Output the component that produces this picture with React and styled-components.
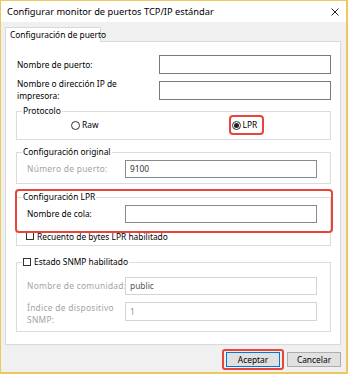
import React from "react";
import styled, { createGlobalStyle } from "styled-components";

const GlobalStyle = createGlobalStyle`
  html, body {
    margin: 0;
    padding: 0;
    background: #ffffff;
  }
  body {
    font-family: "Noto Sans", "Open Sans", sans-serif;
    font-size: 8.4px;
    color: #000;
  }
  * {
    box-sizing: border-box;
  }
`;

const Window = styled.div`
  width: 348px;
  height: 374px;
  border: 1px solid #ecc85e;
  border-right-width: 2px;
  border-bottom-width: 2px;
  background: #f0f0f0;
  display: flex;
  flex-direction: column;
`;

const TitleBar = styled.div`
  height: 21px;
  background: #ffffff;
  display: flex;
  align-items: center;
  justify-content: space-between;
  padding: 0 7px 0 6px;
`;

const Title = styled.div`
  font-size: 9.3px;
  color: #000;
  white-space: nowrap;
`;

const Body = styled.div`
  display: flex;
  flex-direction: column;
  padding: 5px 5px 0 4px;
`;

const Tab = styled.div`
  align-self: flex-start;
  width: 96px;
  height: 15px;
  background: #ffffff;
  border: 1px solid #d9d9d9;
  border-bottom: none;
  margin-bottom: -1px;
  padding: 0 4px;
  line-height: 14px;
  white-space: nowrap;
  position: relative;
  z-index: 1;
`;

const Panel = styled.div`
  height: 304px;
  background: #ffffff;
  border: 1px solid #d9d9d9;
  padding: 13px 9px 0 10px;
  display: flex;
  flex-direction: column;
`;

const FieldRow = styled.div`
  display: grid;
  grid-template-columns: ${(p) => p.$label}px 1fr;
  align-items: ${(p) => (p.$top ? "start" : "center")};
  margin-top: ${(p) => p.$mt || 0}px;
`;

const Label = styled.div`
  padding-left: 1px;
  line-height: 12px;
  white-space: nowrap;
  color: ${(p) => (p.$disabled ? "#a3a3a3" : "#000")};
  letter-spacing: ${(p) => (p.$disabled ? "0.3px" : "0")};
`;

const Input = styled.div`
  height: ${(p) => p.$h || 19}px;
  width: ${(p) => p.$w}px;
  background: #ffffff;
  border: 1px solid ${(p) => p.$border || "#7a7a7a"};
  padding: 0 4px;
  line-height: ${(p) => (p.$h || 19) - 2}px;
  color: ${(p) => p.$color || "#333"};
`;

const Group = styled.fieldset`
  margin: ${(p) => p.$mt || 0}px 0 0 0;
  padding: ${(p) => p.$pt || 0}px 11px ${(p) => p.$pb || 0}px 9px;
  border: 1px solid #dcdcdc;
  width: 315px;
  position: relative;
  min-width: 0;
`;

const Legend = styled.legend`
  margin-left: -4px;
  padding: 0 1px;
  line-height: 12px;
  height: 12px;
  display: flex;
  align-items: center;
  gap: 3px;
  white-space: nowrap;
`;

const RadioRow = styled.div`
  display: flex;
  align-items: center;
  padding-left: 42px;
  gap: 123px;
  height: 12px;
`;

const Choice = styled.label`
  display: flex;
  align-items: center;
  gap: 2px;
  line-height: 12px;
  border: ${(p) => (p.$marked ? "2px solid #e8433c" : "2px solid transparent")};
  border-radius: 4px;
  padding: 2px 5px 2px 1px;
`;

const Radio = styled.span`
  width: 9px;
  height: 9px;
  border-radius: 50%;
  border: 1px solid #333;
  background: #fff;
  display: flex;
  align-items: center;
  justify-content: center;
  &::after {
    content: "";
    width: 5px;
    height: 5px;
    border-radius: 50%;
    background: ${(p) => (p.$checked ? "#222" : "transparent")};
  }
`;

const Check = styled.span`
  width: 8px;
  height: 8px;
  border: 1px solid #333;
  background: #fff;
  flex-shrink: 0;
`;

const CheckRow = styled.div`
  display: flex;
  align-items: center;
  gap: 3px;
  height: 12px;
  white-space: nowrap;
  margin-top: ${(p) => p.$mt || 0}px;
`;

const Highlight = styled.div`
  position: absolute;
  left: -2px;
  top: -14px;
  width: 318px;
  height: 44px;
  border: 2px solid #e8433c;
  border-radius: 4px;
  pointer-events: none;
`;

const ButtonBar = styled.div`
  display: flex;
  justify-content: flex-end;
  align-items: center;
  gap: 3px;
  padding: 4px 0 0 0;
`;

const Marked = styled.div`
  border: 2px solid #e8433c;
  border-radius: 3px;
  padding: 1px 2px;
`;

const Button = styled.button`
  width: 54px;
  height: 15px;
  font-family: inherit;
  font-size: 8.4px;
  color: #000;
  background: #e1e1e1;
  border: 1px solid ${(p) => (p.$primary ? "#0078d7" : "#adadad")};
  padding: 0;
  line-height: 13px;
`;

const CloseIcon = () => (
  <svg width="8" height="8" viewBox="0 0 8 8">
    <path d="M0.5 0.5 L7.5 7.5 M7.5 0.5 L0.5 7.5" stroke="#222" strokeWidth="1" />
  </svg>
);

export default function App() {
  return (
    <>
      <GlobalStyle />
      <Window>
        <TitleBar>
          <Title>Configurar monitor de puertos TCP/IP estándar</Title>
          <CloseIcon />
        </TitleBar>
        <Body>
          <Tab>Configuración de puerto</Tab>
          <Panel>
            <FieldRow $label={143}>
              <Label>Nombre de puerto:</Label>
              <Input $w={172} />
            </FieldRow>
            <FieldRow $label={143} $mt={4}>
              <Label>
                Nombre o dirección IP de
                <br />
                impresora:
              </Label>
              <Input $w={172} />
            </FieldRow>

            <Group $mt={3} $pt={2} $pb={8}>
              <Legend>Protocolo</Legend>
              <RadioRow>
                <Choice>
                  <Radio />
                  Raw
                </Choice>
                <Choice $marked>
                  <Radio $checked />
                  LPR
                </Choice>
              </RadioRow>
            </Group>

            <Group $mt={6} $pt={2} $pb={5}>
              <Legend>Configuración original</Legend>
              <FieldRow $label={99}>
                <Label $disabled>Número de puerto:</Label>
                <Input $w={192} $h={18} $border="#8a8a8a">
                  9100
                </Input>
              </FieldRow>
            </Group>

            <Group $mt={7} $pt={2} $pb={3}>
              <Highlight />
              <Legend>Configuración LPR</Legend>
              <FieldRow $label={99}>
                <Label>Nombre de cola:</Label>
                <Input $w={192} $h={18} $border="#8a8a8a" />
              </FieldRow>
              <CheckRow $mt={7}>
                <Check />
                Recuento de bytes LPR habilitado
              </CheckRow>
            </Group>

            <Group $mt={10} $pt={9} $pb={5}>
              <Legend>
                <Check />
                Estado SNMP habilitado
              </Legend>
              <FieldRow $label={99}>
                <Label $disabled>Nombre de comunidad:</Label>
                <Input $w={192} $h={18} $border="#d4d4d4" $color="#555">
                  public
                </Input>
              </FieldRow>
              <FieldRow $label={99} $mt={7} $top>
                <Label $disabled>
                  Índice de dispositivo
                  <br />
                  SNMP:
                </Label>
                <Input $w={192} $h={19} $border="#d4d4d4" $color="#8899aa">
                  1
                </Input>
              </FieldRow>
            </Group>
          </Panel>
          <ButtonBar>
            <Marked>
              <Button $primary>Aceptar</Button>
            </Marked>
            <Button>Cancelar</Button>
          </ButtonBar>
        </Body>
      </Window>
    </>
  );
}
